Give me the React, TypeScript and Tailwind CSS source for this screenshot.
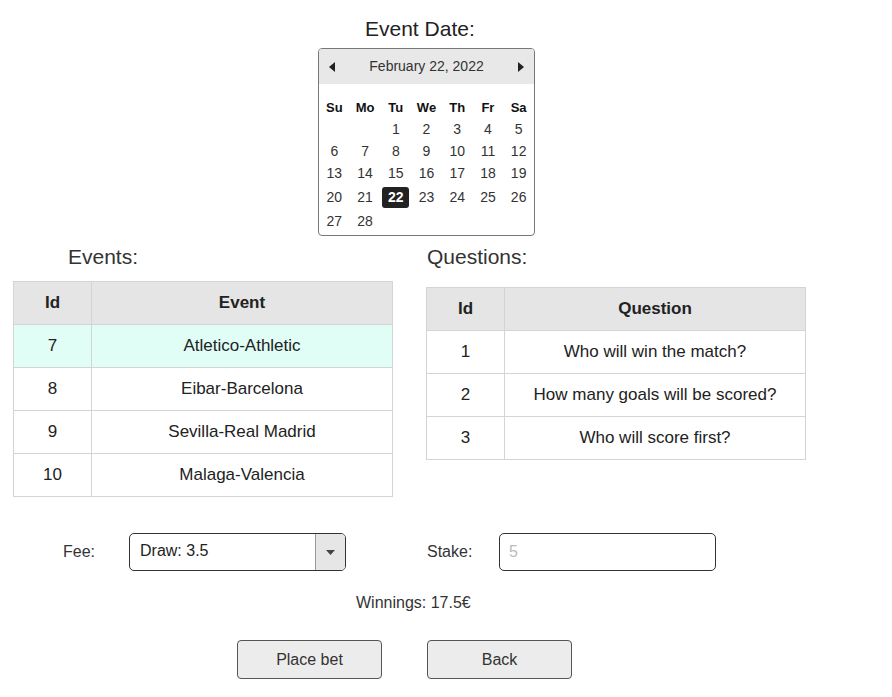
import React from "react";

const events = [
  { id: 7, name: "Atletico-Athletic" },
  { id: 8, name: "Eibar-Barcelona" },
  { id: 9, name: "Sevilla-Real Madrid" },
  { id: 10, name: "Malaga-Valencia" },
];

const questions = [
  { id: 1, text: "Who will win the match?" },
  { id: 2, text: "How many goals will be scored?" },
  { id: 3, text: "Who will score first?" },
];

const weeks: (number | null)[][] = [
  [null, null, 1, 2, 3, 4, 5],
  [6, 7, 8, 9, 10, 11, 12],
  [13, 14, 15, 16, 17, 18, 19],
  [20, 21, 22, 23, 24, 25, 26],
  [27, 28, null, null, null, null, null],
];

function Calendar() {
  return (
    <div className="w-[217px] h-[188px] border border-[#777] rounded-[4px] overflow-hidden bg-white">
      <div className="h-[35px] bg-[#e8e8e8] flex items-center justify-between px-[10px] text-[14px] text-[#333]">
        <svg width="6" height="10" viewBox="0 0 6 10"><path d="M6 0 L0 5 L6 10 Z" fill="#222" /></svg>
        <span>February 22, 2022</span>
        <svg width="6" height="10" viewBox="0 0 6 10"><path d="M0 0 L6 5 L0 10 Z" fill="#222" /></svg>
      </div>
      <div className="pt-[13px]">
        <div className="grid grid-cols-7 h-[21px] items-center text-[13px] font-bold text-[#111]">
          {["Su", "Mo", "Tu", "We", "Th", "Fr", "Sa"].map((d) => (
            <div key={d} className="text-center">{d}</div>
          ))}
        </div>
        {weeks.map((w, i) => (
          <div key={i} className={`grid grid-cols-7 items-center text-[14px] text-[#333] ${i === 3 ? "h-[26px]" : "h-[22px]"}`}>
            {w.map((d, j) => (
              <div key={j} className="flex justify-center">
                {d === 22 ? (
                  <span className="w-[27px] h-[21px] bg-[#222] text-white font-bold rounded-[3px] flex items-center justify-center">22</span>
                ) : (
                  <span>{d ?? ""}</span>
                )}
              </div>
            ))}
          </div>
        ))}
      </div>
    </div>
  );
}

function DataTable({ head, rows, selected }: { head: string; rows: { id: number; label: string }[]; selected?: number }) {
  return (
    <table className="w-[380px] border-collapse text-[17px] text-[#222]">
      <thead>
        <tr className="h-[43px] bg-[#e5e5e5]">
          <th className="w-[78px] border border-[#d4d4d4] font-bold">Id</th>
          <th className="border border-[#d4d4d4] font-bold">{head}</th>
        </tr>
      </thead>
      <tbody>
        {rows.map((r) => (
          <tr key={r.id} className={`h-[43px] ${r.id === selected ? "bg-[#e0fdf6]" : "bg-white"}`}>
            <td className="border border-[#d4d4d4] text-center">{r.id}</td>
            <td className="border border-[#d4d4d4] text-center">{r.label}</td>
          </tr>
        ))}
      </tbody>
    </table>
  );
}

export default function App() {
  return (
    <div className="w-[892px] h-[697px] bg-white overflow-hidden text-[#222]" style={{ fontFamily: '"Liberation Sans", Arial, sans-serif' }}>
      <div className="pl-[13px] w-[805px]">
        <div className="pt-[17px] ml-[352px] text-[21px] leading-[24px] text-[#222]">Event Date:</div>
        <div className="mt-[7px] ml-[305px]">
          <Calendar />
        </div>

        <div className="flex gap-[33px] mt-[9px]">
          <div className="flex flex-col">
            <div className="ml-[55px] text-[21px] leading-[24px] text-[#333]">Events:</div>
            <div className="mt-[12px]">
              <DataTable head="Event" rows={events.map((e) => ({ id: e.id, label: e.name }))} selected={7} />
            </div>
          </div>
          <div className="flex flex-col">
            <div className="ml-[1px] text-[21px] leading-[24px] text-[#333]">Questions:</div>
            <div className="mt-[18px]">
              <DataTable head="Question" rows={questions.map((q) => ({ id: q.id, label: q.text }))} />
            </div>
          </div>
        </div>

        <div className="flex items-center mt-[36px] text-[16px] text-[#333]">
          <span className="ml-[50px] w-[66px]">Fee:</span>
          <div className="w-[217px] h-[38px] border border-[#333] rounded-[5px] flex overflow-hidden">
            <span className="flex-1 pl-[10px] pt-[5px] text-[#222]">Draw: 3.5</span>
            <div className="w-[30px] bg-[#e6e6e6] border-l border-[#999] flex items-center justify-center">
              <svg width="9" height="5" viewBox="0 0 9 5"><path d="M0 0 L9 0 L4.5 5 Z" fill="#444" /></svg>
            </div>
          </div>
          <span className="ml-[81px] w-[72px]">Stake:</span>
          <div className="w-[217px] h-[38px] border border-[#333] rounded-[5px] flex items-center pl-[9px] text-[#bbb]">5</div>
        </div>

        <div className="mt-[23px] ml-[343px] text-[16px] leading-[18px] text-[#333]">Winnings: 17.5€</div>

        <div className="flex gap-[45px] mt-[28px] ml-[224px]">
          <button className="w-[145px] h-[39px] bg-[#ececec] border border-[#555] rounded-[4px] text-[16px] text-[#333]">Place bet</button>
          <button className="w-[145px] h-[39px] bg-[#ececec] border border-[#555] rounded-[4px] text-[16px] text-[#333]">Back</button>
        </div>
      </div>
    </div>
  );
}
